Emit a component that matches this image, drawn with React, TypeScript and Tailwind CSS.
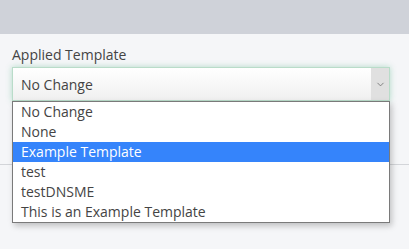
import { ChevronDown } from "lucide-react";

const options = [
  "No Change",
  "None",
  "Example Template",
  "test",
  "testDNSME",
  "This is an Example Template",
];

export default function App() {
  const selected = "Example Template";

  return (
    <div className="w-[409px] h-[249px] bg-[#f5f6f8] font-['Open_Sans',sans-serif] text-[#444] overflow-hidden">
      {/* Top bar */}
      <div className="h-[34px] bg-[#cfd2d9]" />

      {/* Form section */}
      <div className="h-[131px] border-b border-[#d3d5d9] px-[12px] pt-[11px]">
        <div className="text-[14px] leading-[20px] text-[#444]">Applied Template</div>
        <div className="relative w-[378px] mt-[2px]">
          <div className="flex h-[34px] items-stretch border border-[#b9dcc9] bg-gradient-to-b from-white to-[#f0f0f0] shadow-[0_0_6px_rgba(90,185,140,0.45)]">
            <div className="flex flex-1 items-center pl-[8px] text-[14px] text-[#444]">No Change</div>
            <div className="flex w-[18px] items-center justify-center bg-[#e0e0e0]">
              <ChevronDown className="h-[11px] w-[11px] text-[#6b6b6b]" strokeWidth={1.75} />
            </div>
          </div>

          {/* Open list */}
          <div className="absolute left-0 top-[34px] w-[378px] border border-[#7a7a7a] bg-white shadow-[2px_3px_6px_rgba(0,0,0,0.22)]">
            {options.map((opt) => (
              <div
                key={opt}
                className={`h-[20px] pl-[8px] text-[14px] leading-[20px] ${
                  opt === selected ? "bg-[#3584fb] text-white" : "text-[#444]"
                }`}
              >
                {opt}
              </div>
            ))}
          </div>
        </div>
      </div>
    </div>
  );
}
